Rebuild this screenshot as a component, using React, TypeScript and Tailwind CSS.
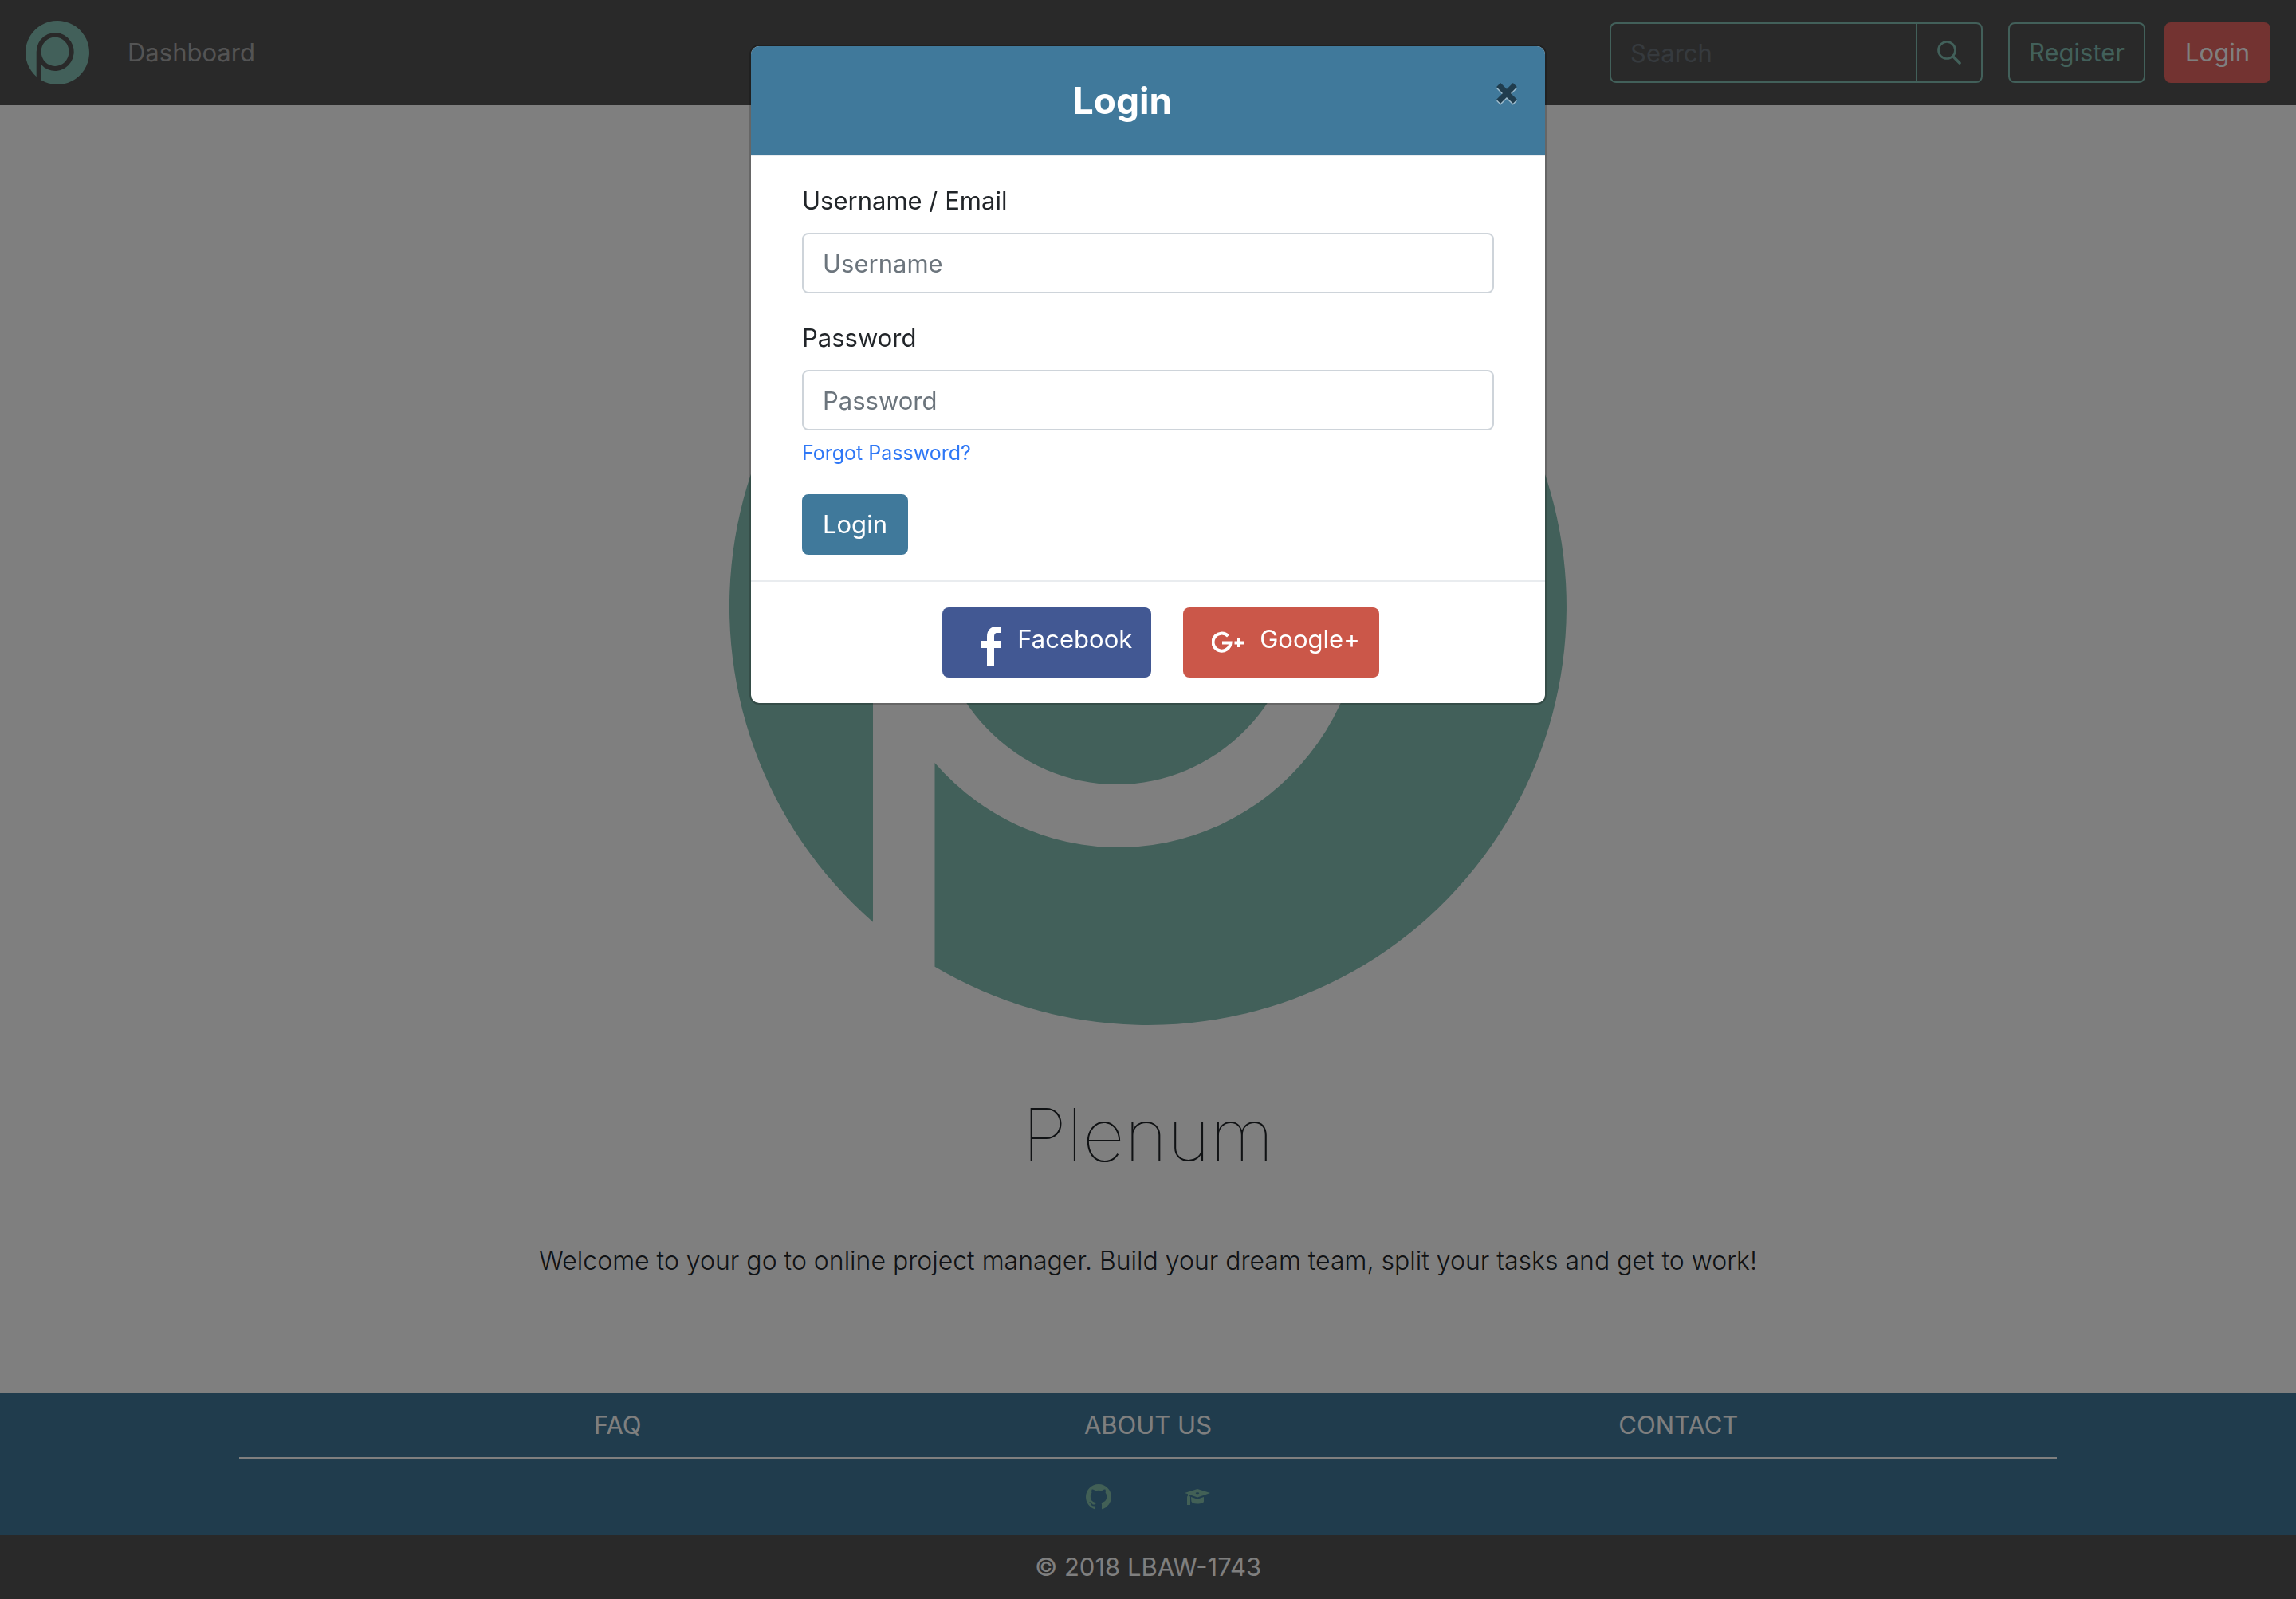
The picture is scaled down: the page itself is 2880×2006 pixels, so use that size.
import React from 'react';

function PlenumLogo({ className }: { className: string }) {
  return (
    <svg viewBox="0 0 1050 1050" className={className} role="img" aria-label="Plenum logo">
      <path
        fill="#84c0b4"
        fillRule="evenodd"
        d="M180 920.73 A525 525 0 1 1 257.500 976.73 L257.500 721 A308 315 0 1 0 180 512 Z"
      />
      <ellipse cx="486" cy="510" rx="230" ry="238" fill="#84c0b4" />
    </svg>
  );
}

function SearchIcon() {
  return (
    <svg viewBox="0 0 30 30" className="size-[30px]" fill="none" stroke="currentColor" aria-hidden="true">
      <circle cx="12" cy="12" r="10.5" strokeWidth="2.700" />
      <path d="M20 20l8 8" strokeWidth="3.600" strokeLinecap="round" />
    </svg>
  );
}

function GithubIcon() {
  return (
    <svg viewBox="0 0 16 16" className="size-8" fill="currentColor" aria-hidden="true">
      <path d="M8 0C3.58 0 0 3.58 0 8c0 3.54 2.29 6.53 5.47 7.59.4.07.55-.17.55-.38 0-.19-.01-.82-.01-1.49-2.01.37-2.53-.49-2.69-.94-.09-.23-.48-.94-.82-1.13-.28-.15-.68-.52-.01-.53.63-.01 1.08.58 1.23.82.72 1.21 1.87.87 2.33.66.07-.52.28-.87.51-1.07-1.78-.2-3.64-.89-3.64-3.95 0-.87.31-1.59.82-2.15-.08-.2-.36-1.02.08-2.12 0 0 .67-.21 2.2.82.64-.18 1.32-.27 2-.27.68 0 1.36.09 2 .27 1.53-1.04 2.2-.82 2.2-.82.44 1.1.16 1.92.08 2.12.51.56.82 1.27.82 2.15 0 3.07-1.87 3.75-3.65 3.95.29.25.54.73.54 1.48 0 1.07-.01 1.93-.01 2.2 0 .21.15.46.55.38A8.013 8.013 0 0016 8c0-4.42-3.58-8-8-8z" />
    </svg>
  );
}

function MortarBoardIcon() {
  return (
    <svg viewBox="0 0 32 32" className="size-8" fill="currentColor" fillRule="evenodd" aria-hidden="true">
      <path d="M16 6L32 11L16 16.500L6 13V14.500C6.700 15 7 15.500 7 16.200V26H3V16.200C3 15.500 3.400 15 4 14.500V12.300L0 11zM16 10.200c-1.300 0-2.200.4-2.200 1s.9 1 2.200 1 2.200-.4 2.200-1-.9-1-2.200-1z" />
      <path d="M8 16L16 18.800L24 16V21.500C24 23.500 20.500 24.500 16 24.500S9 23.500 8.400 21.500z" />
    </svg>
  );
}

const control = 'h-[76px] rounded-lg border-2 px-6 text-[31px] leading-[48px]';

function NavBar() {
  return (
    <header className="flex h-[132px] items-center bg-[#525252] px-8">
      <a href="#home" className="mr-12">
        <PlenumLogo className="size-20" />
      </a>
      <a href="#dashboard" className="text-[31px] leading-[48px] text-[#a8a8a8]">
        Dashboard
      </a>
      <div className="ml-auto flex items-center">
        <form className="mr-8 flex">
          <input
            type="search"
            aria-label="Search"
            placeholder="Search"
            className="h-[76px] w-[384px] rounded-l-lg border-2 border-r-0 border-[#84c0b4] px-6 text-[31px] leading-[48px] placeholder:text-[#6c757d]"
          />
          <button
            type="button"
            aria-label="Submit search"
            className="flex h-[76px] w-[84px] items-center justify-center rounded-r-lg border-2 border-[#84c0b4] text-[#84c0b4]"
          >
            <SearchIcon />
          </button>
        </form>
        <button type="button" className={control + ' mr-6 border-[#84c0b4] text-[#84c0b4]'}>
          Register
        </button>
        <button type="button" className={control + ' border-[#e66662] bg-[#e66662] text-white'}>
          Login
        </button>
      </div>
    </header>
  );
}

function Hero() {
  return (
    <main className="flex flex-1 flex-col items-center bg-white pt-[104px] text-[#212529]">
      <PlenumLogo className="size-[1050px]" />
      <h1 className="mt-20 text-[92px] leading-[116px] font-thin">Plenum</h1>
      <p className="mt-[76px] text-[32px] leading-[48px] font-light">
        Welcome to your go to online project manager. Build your dream team, split your tasks and get to work!
      </p>
    </main>
  );
}

function Footer() {
  return (
    <footer className="text-[31px] leading-[48px] text-white">
      <div className="h-[178px] bg-[#40799b] px-[300px] pt-4">
        <nav className="grid grid-cols-3 border-b-2 border-white px-[142px] pb-4 text-center">
          <a href="#faq">FAQ</a>
          <a href="#about">ABOUT US</a>
          <a href="#contact">CONTACT</a>
        </nav>
        <div className="mt-8 flex justify-center gap-[92px] text-[#84c0ac]">
          <a href="#github" aria-label="GitHub">
            <GithubIcon />
          </a>
          <a href="#university" aria-label="University">
            <MortarBoardIcon />
          </a>
        </div>
      </div>
      <p className="bg-[#525252] py-4 text-center">© 2018 LBAW-1743</p>
    </footer>
  );
}

function LoginModal() {
  const field =
    'mt-4 block h-[76px] w-full rounded-lg border-2 border-[#ced4da] bg-white px-6 text-[31px] leading-[48px] placeholder:text-[#6c757d]';
  return (
    <div className="fixed inset-0 bg-black/50 pt-14">
      <div
        role="dialog"
        aria-labelledby="login-title"
        className="mx-auto w-[1000px] overflow-hidden rounded-xl border-2 border-black/20 bg-white bg-clip-padding text-[31px] leading-[48px] text-[#212529]"
      >
        <div className="flex items-start border-b-2 border-[#e9ecef] bg-[#40799b] pl-8">
          <h2 id="login-title" className="flex-1 py-8 text-center text-[46px] leading-[72px] font-bold text-white">
            Login
          </h2>
          <button
            type="button"
            aria-label="Close"
            className="h-28 w-24 text-5xl leading-[112px] font-extrabold text-[#203d4e] [text-shadow:0_2px_0_#9fbccd]"
          >
            ×
          </button>
        </div>
        <form className="border-b-2 border-[#e9ecef] px-16 py-8">
          <label htmlFor="username" className="block">
            Username / Email
          </label>
          <input id="username" type="text" placeholder="Username" className={field} />
          <label htmlFor="password" className="mt-8 block">
            Password
          </label>
          <input id="password" type="password" placeholder="Password" className={field} />
          <a href="#forgot" className="mt-2 block text-[25px] leading-[40px] text-[#2f78f6]">
            Forgot Password?
          </a>
          <button type="button" className={control + ' mt-8 border-[#40799b] bg-[#40799b] text-white'}>
            Login
          </button>
        </form>
        <div className="flex justify-center gap-10 py-8 pl-8 text-white">
          <button type="button" className="flex h-[88px] rounded-lg bg-[#425893] py-4 pr-6 pl-12">
            <svg viewBox="0 0 26 50" className="mt-2 mr-5 h-[50px] w-[26px]" fill="currentColor" aria-hidden="true">
              <path d="M8 50V27H0V18H8V13C8 4 13 0 20 0h6v8h-5c-3 0-4 2-4 5v5h9l-1 9h-8v23z" />
            </svg>
            Facebook
          </button>
          <button type="button" className="flex h-[88px] rounded-lg bg-[#cb5749] py-4 pr-6 pl-9">
            <svg viewBox="0 0 40 28" className="mt-[14px] mr-5 h-7 w-10" fill="none" stroke="currentColor" strokeWidth="4" aria-hidden="true">
              <path d="M20.500 6A11 11 0 1 0 23.500 14.500H13M34 9V20M28.500 14.500H40" />
            </svg>
            Google+
          </button>
        </div>
      </div>
    </div>
  );
}

export default function App() {
  return (
    <div className="flex min-h-screen flex-col font-['Inter',sans-serif]">
      <NavBar />
      <Hero />
      <Footer />
      <LoginModal />
    </div>
  );
}
